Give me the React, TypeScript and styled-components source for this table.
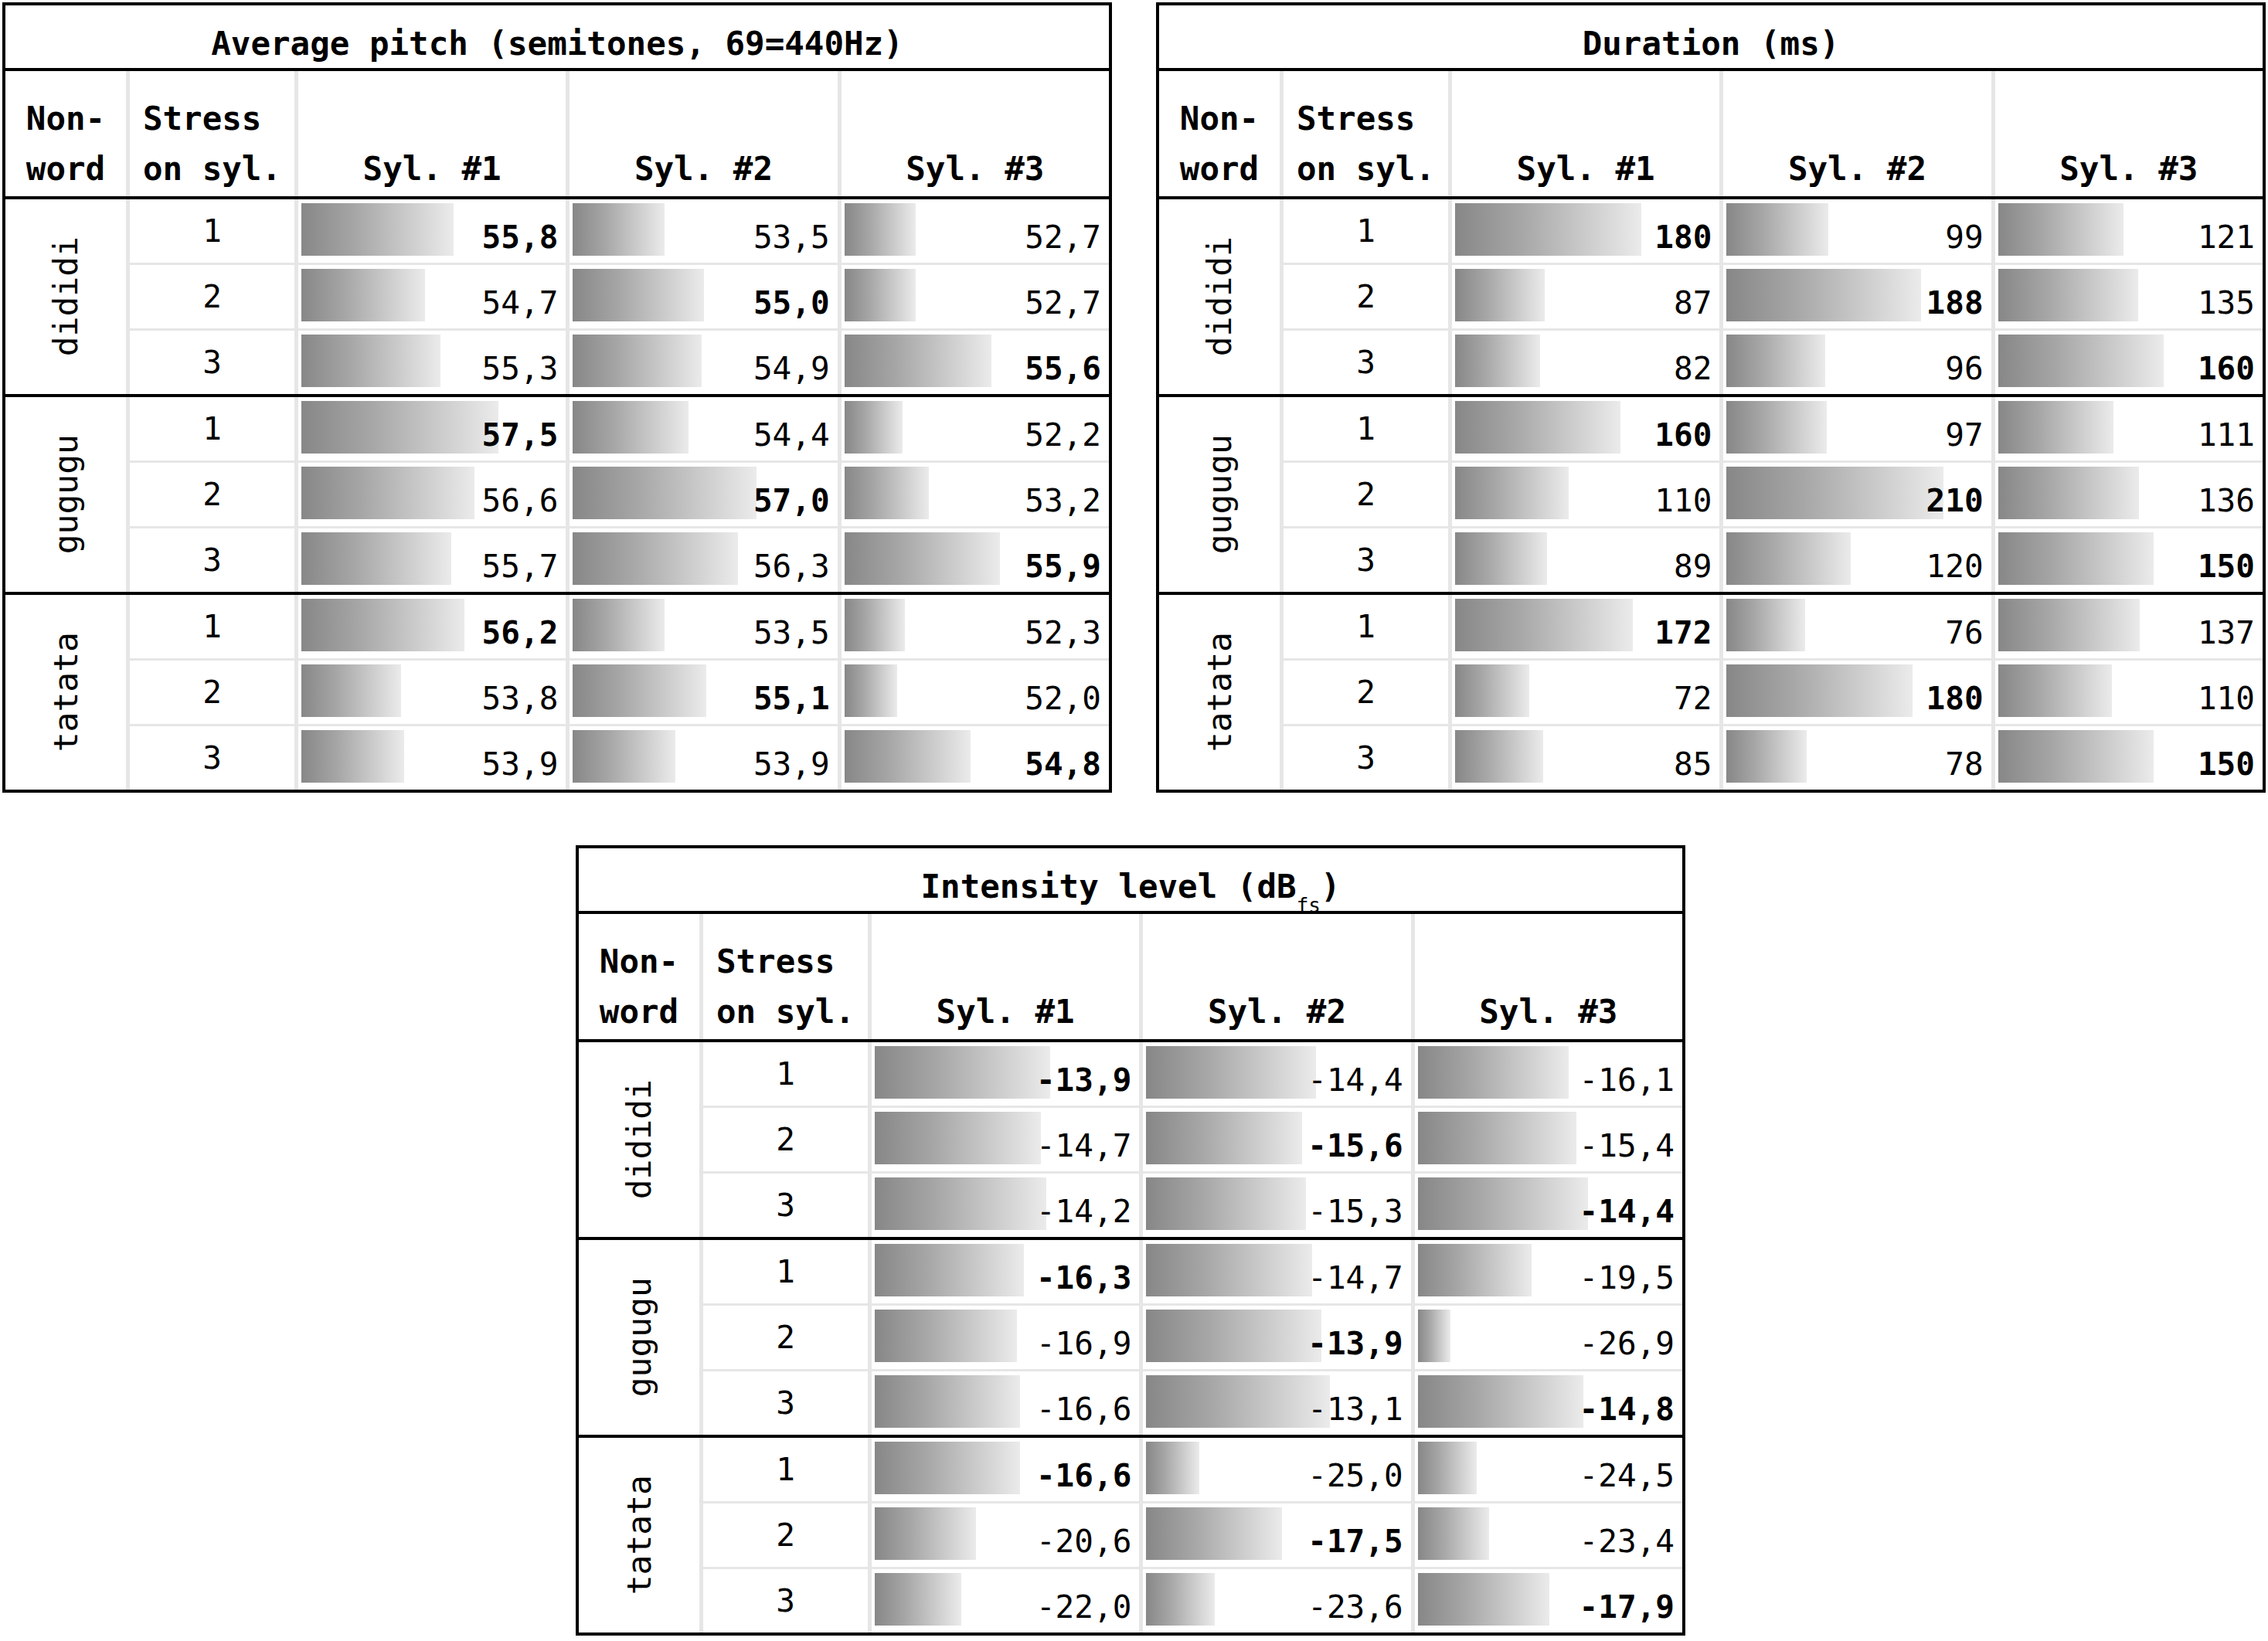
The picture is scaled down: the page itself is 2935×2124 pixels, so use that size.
import React, { FC, ReactNode } from "react";
import styled, { createGlobalStyle } from "styled-components";

const GlobalStyle = createGlobalStyle`
  body {
    margin: 0;
    background: #fff;
  }
`;

const Page = styled.div`
  width: 2935px;
  box-sizing: border-box;
  padding: 3px 3px 0;
  display: flex;
  flex-direction: column;
  gap: 68px;
  font-family: "DejaVu Sans Mono", "Liberation Mono", monospace;
  font-size: 41px;
  color: #000;
`;

const TopRow = styled.div`
  display: flex;
  justify-content: space-between;
`;

const BottomRow = styled.div`
  display: flex;
  justify-content: center;
  padding-right: 9px;
`;

// One measurement table
const TableBox = styled.div`
  width: 1436px;
  box-sizing: border-box;
  border: 4px solid #000;
  background: #fff;
`;

const Title = styled.div`
  height: 85px;
  box-sizing: border-box;
  border-bottom: 4px solid #000;
  display: flex;
  align-items: flex-end;
  justify-content: center;
  padding-bottom: 7px;
  line-height: 48px;
  font-size: 42.5px;
  font-weight: bold;
  white-space: pre;
`;

const Sub = styled.sub`
  font-size: 26px;
  font-weight: normal;
  vertical-align: -9px;
  line-height: 0;
`;

const Grid = styled.div`
  display: grid;
  grid-template-columns: 156px 213px repeat(3, 1fr);
  column-gap: 5px;
  background: #e6e6e6;
`;

const HeaderRow = styled(Grid)`
  height: 162px;
  border-bottom: 4px solid #000;
`;

const HeaderCell = styled.div`
  background: #fff;
  display: flex;
  flex-direction: column;
  justify-content: flex-end;
  align-items: center;
  padding-bottom: 3px;
  line-height: 65px;
  font-size: 42.5px;
  font-weight: bold;
  white-space: pre;
`;

const Group = styled(Grid)`
  grid-auto-rows: 82px;
  row-gap: 3px;

  & + & {
    border-top: 4px solid #000;
  }
`;

const WordCell = styled.div`
  grid-row: 1 / span 3;
  background: #fff;
  display: flex;
  align-items: center;
  justify-content: center;
`;

const WordLabel = styled.span`
  writing-mode: vertical-rl;
  transform: rotate(180deg);
  line-height: 48px;
  font-size: 43px;
`;

const StressCell = styled.div`
  background: #fff;
  display: flex;
  align-items: center;
  justify-content: center;
  line-height: 48px;
`;

const ValueCell = styled.div`
  background: #fff;
  display: grid;
  padding: 5px 10px 9px 4px;
`;

const Bar = styled.div`
  grid-area: 1 / 1;
  justify-self: start;
  align-self: start;
  height: 68px;
  background: linear-gradient(90deg, #878787 0%, #a6a6a6 35%, #ebebeb 100%);
`;

const Value = styled.span<{ $bold: boolean }>`
  grid-area: 1 / 1;
  justify-self: end;
  align-self: end;
  line-height: 48px;
  font-weight: ${(p) => (p.$bold ? "bold" : "normal")};
`;

const words = ["dididi", "gugugu", "tatata"];

interface IMeasure {
  title: ReactNode;
  groups: number[][][];
  barWidth: (v: number) => number;
  decimals: number;
}

const pitch: IMeasure = {
  title: "Average pitch (semitones, 69=440Hz)",
  groups: [
    [[55.8, 53.5, 52.7], [54.7, 55.0, 52.7], [55.3, 54.9, 55.6]],
    [[57.5, 54.4, 52.2], [56.6, 57.0, 53.2], [55.7, 56.3, 55.9]],
    [[56.2, 53.5, 52.3], [53.8, 55.1, 52.0], [53.9, 53.9, 54.8]],
  ],
  barWidth: (v) => (v - 50) * 34,
  decimals: 1,
};

const duration: IMeasure = {
  title: "Duration (ms)",
  groups: [
    [[180, 99, 121], [87, 188, 135], [82, 96, 160]],
    [[160, 97, 111], [110, 210, 136], [89, 120, 150]],
    [[172, 76, 137], [72, 180, 110], [85, 78, 150]],
  ],
  barWidth: (v) => v * 1.338,
  decimals: 0,
};

const intensity: IMeasure = {
  title: (
    <>
      Intensity level (dB<Sub>fs</Sub>)
    </>
  ),
  groups: [
    [[-13.9, -14.4, -16.1], [-14.7, -15.6, -15.4], [-14.2, -15.3, -14.4]],
    [[-16.3, -14.7, -19.5], [-16.9, -13.9, -26.9], [-16.6, -13.1, -14.8]],
    [[-16.6, -25.0, -24.5], [-20.6, -17.5, -23.4], [-22.0, -23.6, -17.9]],
  ],
  barWidth: (v) => (v + 29.86) * 14.2,
  decimals: 1,
};

const format = (v: number, decimals: number) => v.toFixed(decimals).replace(".", ",");

const MeasureTable: FC<{ measure: IMeasure }> = ({ measure }) => {
  const { title, groups, barWidth, decimals } = measure;

  return (
    <TableBox>
      <Title>{title}</Title>
      <HeaderRow>
        <HeaderCell>{"Non-\nword"}</HeaderCell>
        <HeaderCell>{"Stress\non syl."}</HeaderCell>
        <HeaderCell>Syl. #1</HeaderCell>
        <HeaderCell>Syl. #2</HeaderCell>
        <HeaderCell>Syl. #3</HeaderCell>
      </HeaderRow>
      {groups.map((rows, g) => (
        <Group key={words[g]}>
          <WordCell>
            <WordLabel>{words[g]}</WordLabel>
          </WordCell>
          {rows.map((values, r) => (
            <React.Fragment key={r}>
              <StressCell>{r + 1}</StressCell>
              {values.map((v, c) => (
                <ValueCell key={c}>
                  <Bar style={{ width: `${Math.round(barWidth(v))}px` }} />
                  {/* the stressed syllable is printed in bold */}
                  <Value $bold={c === r}>{format(v, decimals)}</Value>
                </ValueCell>
              ))}
            </React.Fragment>
          ))}
        </Group>
      ))}
    </TableBox>
  );
};

const App: FC = () => (
  <>
    <GlobalStyle />
    <Page>
      <TopRow>
        <MeasureTable measure={pitch} />
        <MeasureTable measure={duration} />
      </TopRow>
      <BottomRow>
        <MeasureTable measure={intensity} />
      </BottomRow>
    </Page>
  </>
);

export default App;
